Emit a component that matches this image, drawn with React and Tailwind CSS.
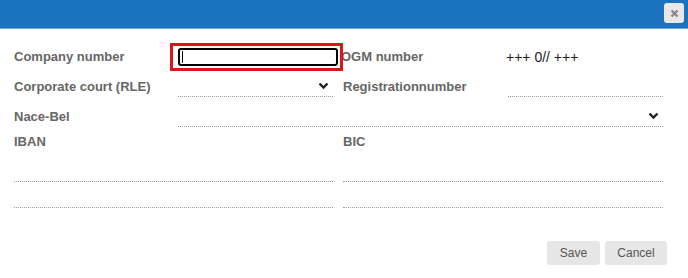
import React from 'react';

function Chevron() {
  return (
    <svg width="11" height="8" viewBox="0 0 11 8" className="shrink-0">
      <polyline points="1.5,1.5 5.5,5.5 9.5,1.5" fill="none" stroke="#222" strokeWidth="2.4" />
    </svg>
  );
}

function Label({ children, className = '' }) {
  return (
    <div className={'text-[13px] font-bold text-[#666] leading-[16px] whitespace-nowrap ' + className}>
      {children}
    </div>
  );
}

export default function App() {
  return (
    <div className="w-[688px] h-[278px] bg-white overflow-hidden" style={{ fontFamily: '"Liberation Sans", Arial, sans-serif' }}>
      <div className="h-[29px] bg-[#1b72be] border-b border-[#6aa3d8] flex justify-end items-start pt-[3px] pr-[4px]">
        <button className="w-[20px] h-[20px] bg-[#e8e8e8] rounded-[3px] flex items-center justify-center">
          <svg width="9" height="9" viewBox="0 0 9 9">
            <path d="M1.5 1.5 L7.5 7.5 M7.5 1.5 L1.5 7.5" stroke="#888" strokeWidth="2.4" />
          </svg>
        </button>
      </div>

      <div className="pl-[14px] pr-[25px]">
        {/* row 1 */}
        <div className="flex items-center h-[28px] mt-[14px]">
          <Label className="w-[156px]">Company number</Label>
          <div className="w-[173px] h-[28px] border-[3px] border-[#e0141b] pl-[5px] flex items-center relative z-10">
            <div className="w-[160px] h-[18px] border-2 border-black rounded-[3px] flex items-center pl-[2px]">
              <div className="w-px h-[12px] bg-black" />
            </div>
          </div>
          <Label className="w-[165px] -ml-[2px]">OGM number</Label>
          <div className="text-[14px] text-[#222] leading-[16px]">+++ 0// +++</div>
        </div>

        {/* row 2 */}
        <div className="flex h-[26px]">
          <Label className="w-[164px] pt-[8px]">Corporate court (RLE)</Label>
          <div className="w-[155px] h-full border-b border-dotted border-[#999] flex items-end justify-end pr-[4px] pb-[6px]">
            <Chevron />
          </div>
          <Label className="w-[175px] pl-[10px] pt-[8px]">Registrationnumber</Label>
          <div className="w-[155px] h-full border-b border-dotted border-[#999]" />
        </div>

        {/* row 3 */}
        <div className="flex h-[30px]">
          <Label className="w-[164px] pt-[12px]">Nace-Bel</Label>
          <div className="w-[485px] h-full border-b border-dotted border-[#999] flex items-end justify-end pr-[4px] pb-[6px]">
            <Chevron />
          </div>
        </div>

        {/* IBAN / BIC */}
        <div className="grid grid-cols-[319px_320px] gap-x-[10px] mt-[7px]">
          <div>
            <Label>IBAN</Label>
            <div className="h-[32px] border-b border-dotted border-[#999]" />
            <div className="h-[26px] border-b border-dotted border-[#999]" />
          </div>
          <div>
            <Label>BIC</Label>
            <div className="h-[32px] border-b border-dotted border-[#999]" />
            <div className="h-[26px] border-b border-dotted border-[#999]" />
          </div>
        </div>
      </div>

      <div className="flex justify-end gap-[5px] pr-[21px] mt-[33px]">
        <button className="w-[53px] h-[24px] bg-[#e6e6e6] rounded-[3px] text-[12px] text-[#555]">Save</button>
        <button className="w-[62px] h-[24px] bg-[#e6e6e6] rounded-[3px] text-[12px] text-[#555]">Cancel</button>
      </div>
    </div>
  );
}
